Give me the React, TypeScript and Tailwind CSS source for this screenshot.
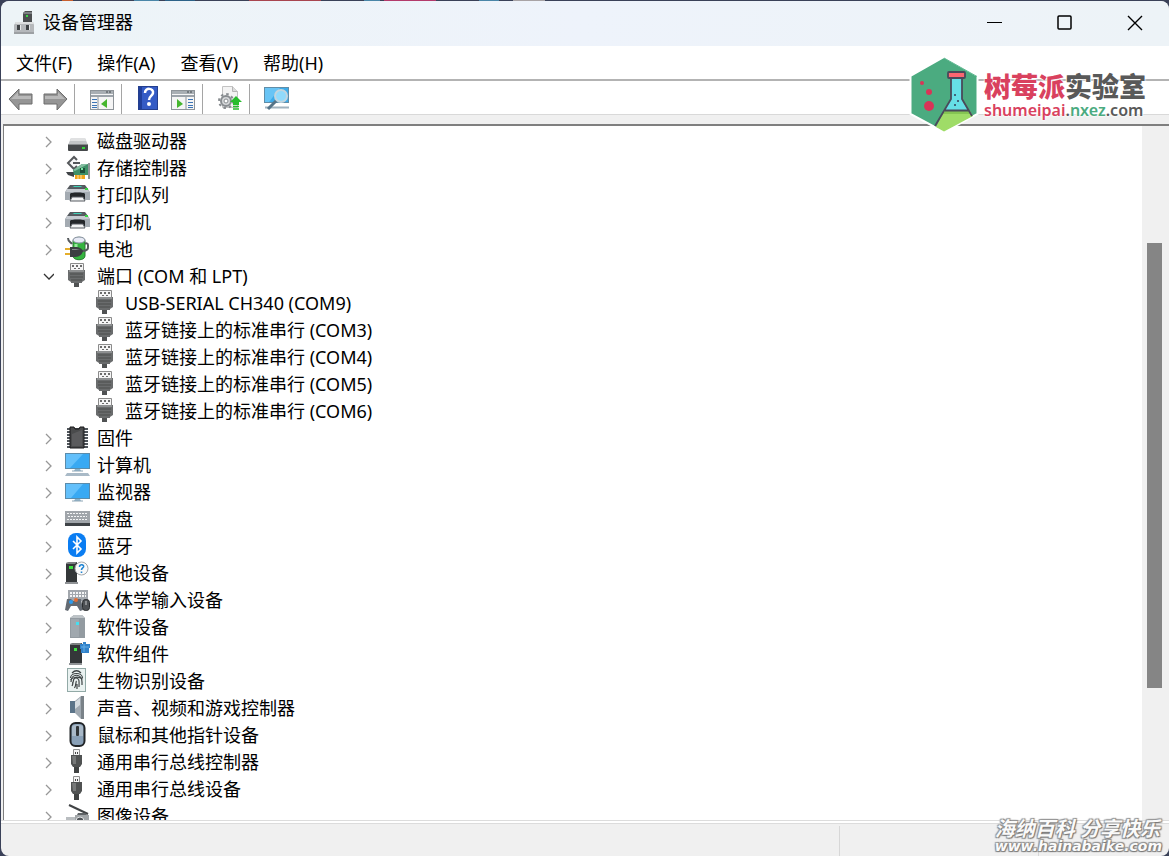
import React, { useState } from "react";

type Device = {
  name: string;
  icon: React.FC;
  children?: string[];
};

const DiskIcon = () => (
  <svg width="26" height="27" viewBox="0 0 26 27">
    <path d="M6 10h14l3 7H3z" fill="#c3c5c7" />
    <path d="M6 10h14l1 3H5z" fill="#e0e1e2" />
    <rect x="3" y="16" width="20" height="7" rx="1" fill="#45484a" />
    <rect x="3" y="16" width="20" height="1" fill="#8a8d8f" />
    <rect x="17" y="19" width="3" height="2" fill="#35d43a" />
  </svg>
);

const StorageIcon = () => (
  <svg width="26" height="27" viewBox="0 0 26 27">
    <path d="M1 17h8v5l-6-2z" fill="#3f4346" />
    <path d="M8 3l6 5-6 6-6-6z" fill="#f7f7f7" />
    <path d="M12 5L9 2 3 8l6 6 3-3M8 8h7" fill="none" stroke="#55585b" strokeWidth="2" />
    <path d="M8 15l9-6h6v11H9z" fill="#3f9068" />
    <path d="M8 15l9-6h6l-13 7z" fill="#83bda0" />
    <rect x="15" y="13" width="5" height="5" fill="#1e4e3a" />
    <rect x="16" y="13" width="2" height="2" fill="#7be8a4" />
    <path d="M10 20h10v4H10z" fill="#f1a51c" />
    <path d="M13 20v4M16 20v4" stroke="#fbe0a0" />
    <path d="M24 8v16" stroke="#909497" strokeWidth="2" />
  </svg>
);

const PrinterIcon = () => (
  <svg width="26" height="27" viewBox="0 0 26 27">
    <path d="M5 3h15l3 4H2z" fill="#54595e" />
    <path d="M7 4h11l1 2H6z" fill="#596066" />
    <path d="M9 4h7l1 1H8z" fill="#3fd0b5" />
    <path d="M2 7h21l2 3v8H0v-8z" fill="#a4abb2" />
    <path d="M2 7h21l1 3H1z" fill="#c5cad0" />
    <rect x="20" y="6" width="3" height="2" fill="#38d343" />
    <path d="M5 12c0-2 15-2 15 0v5H5z" fill="#24272a" />
    <path d="M7 15h11l2 4H5z" fill="#f2f3f4" stroke="#565b60" />
  </svg>
);

const BatteryIcon = () => (
  <svg width="26" height="27" viewBox="0 0 26 27">
    <path d="M8 5c0-5 12-5 12 0v15c0 5-12 5-12 0z" fill="#35b43f" stroke="#287c30" />
    <ellipse cx="14" cy="4" rx="6" ry="3" fill="#e7eaf5" stroke="#8c91a5" />
    <path d="M11 8v10" stroke="#99ec9e" strokeWidth="3" />
    <path d="M3 2c0 4 3 4 4 6" stroke="#55595c" strokeWidth="2" fill="none" />
    <path d="M17 15c7 0 6-3 6-6 0-2-2-2-3-1" stroke="#55595c" strokeWidth="2" fill="none" />
    <path d="M0 13h6M0 18h6" stroke="#e5ae2c" strokeWidth="2" />
    <path d="M5 11h5c5 0 7 2 8 4-1 4-4 6-8 6H5z" fill="#3b3f42" />
    <path d="M7 13h4l4 1H7z" fill="#85898c" />
  </svg>
);

const PortIcon = () => (
  <svg width="26" height="27" viewBox="0 0 26 27">
    <path d="M5.500 8V.5h13V8" fill="#f5f5f5" stroke="#8b8b8b" />
    <path d="M7 2h2v2H7zM11 2h2v2h-2zM15 2h2v2h-2zM9 5h2v1H9zM13 5h2v1h-2z" fill="#6c6c6c" />
    <path d="M3 7h17v10l-3 2v1H6v-1l-3-2z" fill="#6a6c6d" />
    <path d="M4 7h15v2H4z" fill="#8d8f90" />
    <path d="M5 11h13M5 14h13M6 17h11" stroke="#4a4c4d" />
    <rect x="9" y="20" width="5" height="4" fill="#505253" />
  </svg>
);

const FirmwareIcon = () => (
  <svg width="26" height="27" viewBox="0 0 26 27">
    <path d="M2 4h21M2 7h21M2 10h21M2 13h21M2 16h21M2 19h21M2 22h21" stroke="#50565c" strokeWidth="2" />
    <path d="M5 2h4l1 2h4l1-2h4v21H5z" fill="#4a4b4c" stroke="#19191a" />
    <path d="M7 9l10-4v16H7z" fill="#6b6c6d" opacity="0.5" />
  </svg>
);

const ComputerIcon = () => (
  <svg width="26" height="27" viewBox="0 0 26 27">
    <rect x="0.5" y="1.5" width="24" height="15" fill="#39a9f3" stroke="#5b8cab" />
    <path d="M1 2h17L5 16H1z" fill="#63c0fb" />
    <path d="M10 17h5l1 2H9z" fill="#8db4cc" />
    <path d="M7 19h11" stroke="#8da5b5" />
    <path d="M2 21h21l2 3H0z" fill="#a9bac7" />
  </svg>
);

const MonitorIcon = () => (
  <svg width="26" height="27" viewBox="0 0 26 27">
    <rect x="0.5" y="4.5" width="24" height="15" fill="#39a9f3" stroke="#5b8cab" />
    <path d="M1 5h17L6 19H1z" fill="#63c0fb" />
    <path d="M10 20h5l1 2H9z" fill="#8db4cc" />
    <path d="M7 22h11" stroke="#8da5b5" />
  </svg>
);

const KeyboardIcon = () => (
  <svg width="26" height="27" viewBox="0 0 26 27">
    <rect x="0" y="5" width="25" height="12" fill="#a0a5aa" />
    <rect x="0" y="17" width="25" height="3" fill="#3e4347" />
    <path d="M2 7.500h21" stroke="#f4f5f6" strokeDasharray="2 1" />
    <path d="M3 10.500h19" stroke="#f4f5f6" strokeDasharray="2 1" />
    <path d="M2 13.500h21" stroke="#f4f5f6" strokeDasharray="2 1" />
  </svg>
);

const BluetoothIcon = () => (
  <svg width="26" height="27" viewBox="0 0 26 27">
    <rect x="3" y="0" width="18" height="24" rx="8" fill="#0a7df2" />
    <path d="M8 8l8 8-4 4V4l4 4-8 8" fill="none" stroke="#fff" strokeWidth="1.600" />
  </svg>
);

const OtherIcon = () => (
  <svg width="26" height="27" viewBox="0 0 26 27">
    <path d="M1 3l4-1h7v20H1z" fill="#343739" />
    <path d="M1 3l4-1h7l-2 2H1z" fill="#7d8082" />
    <rect x="4" y="6" width="4" height="3" fill="#3be03f" />
    <path d="M0 22h13v2H0z" fill="#909396" />
    <circle cx="16.500" cy="8.500" r="6.500" fill="#fafafa" stroke="#a3a7aa" />
    <path d="M14.500 7c0-3.500 5-2.500 4 0-.5 1-2 1-2 3M16.500 11.500v1.500" fill="none" stroke="#1e83d2" strokeWidth="1.600" />
  </svg>
);

const HidIcon = () => (
  <svg width="26" height="27" viewBox="0 0 26 27">
    <rect x="3" y="3" width="20" height="11" fill="#a2a7ad" />
    <path d="M5 6h16M5 9h16" stroke="#f4f5f6" strokeWidth="2" strokeDasharray="2 1" />
    <path d="M2 12h4l2 2h2l2-2h4l2 11-3 1-3-5H6l-3 5-3-1z" fill="#646b73" />
    <circle cx="6" cy="15" r="2" fill="#2d9cf0" />
    <circle cx="11" cy="13" r="2" fill="#e56d35" />
    <rect x="17.500" y="12.500" width="7" height="11" rx="3" fill="#4c5054" stroke="#292c2f" />
    <path d="M21 14v4" stroke="#c6c9cc" />
  </svg>
);

const SoftwareDeviceIcon = () => (
  <svg width="26" height="27" viewBox="0 0 26 27">
    <path d="M5 4l4-3h8l3 3v20H5z" fill="#939ba1" />
    <path d="M5 4l4-3h8l3 3z" fill="#bdc3c7" />
    <path d="M6 5h8v18H6z" fill="#a0a8ae" />
    <rect x="11" y="8" width="3" height="3" fill="#45dff0" />
  </svg>
);

const SoftwareComponentIcon = () => (
  <svg width="26" height="27" viewBox="0 0 26 27">
    <path d="M5 3l4-1h8v20H5z" fill="#343739" />
    <path d="M5 3l4-1h8l-2 2H5z" fill="#7d8082" />
    <rect x="9" y="7" width="3" height="3" fill="#3be03f" />
    <path d="M4 22h13v2H4z" fill="#909396" />
    <path d="M15 3h3V1h3v2h4v4h-1v5h-8V8h-1z" fill="#3283ca" />
    <path d="M19 3v8M16 6h8" stroke="#67afe7" />
  </svg>
);

const BiometricIcon = () => (
  <svg width="26" height="27" viewBox="0 0 26 27">
    <rect x="2.500" y="0.500" width="18" height="23" fill="#eaf2f1" stroke="#92aaa7" />
    <g fill="none" stroke="#3e4345" strokeWidth="1.200">
      <path d="M7 5c3-3 6-3 9 0M5.500 10c0-6 12-6 12 0M6 14c0-9 11-9 11 0v3" />
      <path d="M7 18c2-3 0-8 4-8s3 5 3 9M9.500 20c2-3 1-6 2-7M7 15c2 0 1-3 2-4M12 16v5M5.500 12c2-3 8-4 12-1" />
    </g>
  </svg>
);

const SoundIcon = () => (
  <svg width="26" height="27" viewBox="0 0 26 27">
    <path d="M5 6h5v12H5z" fill="#5b7489" />
    <path d="M10 6l6-5v23l-6-6z" fill="#a0a9b1" />
    <path d="M10 7l5-4v7l-5 4z" fill="#d5dce1" />
    <path d="M16 1h3v23h-3z" fill="#7a8288" />
  </svg>
);

const MouseIcon = () => (
  <svg width="26" height="27" viewBox="0 0 26 27">
    <rect x="5.500" y="1" width="14" height="23" rx="5" fill="#89a0b7" stroke="#212427" strokeWidth="2" />
    <path d="M7 5c1-3 10-3 11 0v9H7z" fill="#a9b9c8" />
    <rect x="11" y="4" width="3" height="10" rx="1" fill="#303437" />
  </svg>
);

const UsbIcon = () => (
  <svg width="26" height="27" viewBox="0 0 26 27">
    <path d="M8.500 7V.5h6V7" fill="#f4f4f4" stroke="#909090" />
    <path d="M10 3h1v2h-1zM12 3h1v2h-1z" fill="#484848" />
    <path d="M6 6h11v9l-2 3H8l-2-3z" fill="#505252" />
    <path d="M7 7h4v8H8z" fill="#777979" />
    <rect x="9" y="18" width="5" height="6" fill="#404242" />
  </svg>
);

const ImagingIcon = () => (
  <svg width="26" height="27" viewBox="0 0 26 27">
    <path d="M4 2l19 9" stroke="#404345" strokeWidth="2" />
    <path d="M1 14h12v8H1z" fill="#b9bdc0" />
    <path d="M10 12h14v10H10z" fill="#a1a5a8" />
    <path d="M13 10h7l2 2H12z" fill="#606467" />
    <circle cx="15" cy="18" r="4" fill="#505458" stroke="#e1e3e5" />
  </svg>
);

const devices: Device[] = [
  { name: "磁盘驱动器", icon: DiskIcon },
  { name: "存储控制器", icon: StorageIcon },
  { name: "打印队列", icon: PrinterIcon },
  { name: "打印机", icon: PrinterIcon },
  { name: "电池", icon: BatteryIcon },
  {
    name: "端口 (COM 和 LPT)",
    icon: PortIcon,
    children: [
      "USB-SERIAL CH340 (COM9)",
      "蓝牙链接上的标准串行 (COM3)",
      "蓝牙链接上的标准串行 (COM4)",
      "蓝牙链接上的标准串行 (COM5)",
      "蓝牙链接上的标准串行 (COM6)",
    ],
  },
  { name: "固件", icon: FirmwareIcon },
  { name: "计算机", icon: ComputerIcon },
  { name: "监视器", icon: MonitorIcon },
  { name: "键盘", icon: KeyboardIcon },
  { name: "蓝牙", icon: BluetoothIcon },
  { name: "其他设备", icon: OtherIcon },
  { name: "人体学输入设备", icon: HidIcon },
  { name: "软件设备", icon: SoftwareDeviceIcon },
  { name: "软件组件", icon: SoftwareComponentIcon },
  { name: "生物识别设备", icon: BiometricIcon },
  { name: "声音、视频和游戏控制器", icon: SoundIcon },
  { name: "鼠标和其他指针设备", icon: MouseIcon },
  { name: "通用串行总线控制器", icon: UsbIcon },
  { name: "通用串行总线设备", icon: UsbIcon },
  { name: "图像设备", icon: ImagingIcon },
];

const menus = ["文件(F)", "操作(A)", "查看(V)", "帮助(H)"];

// Bits of the window behind, seen above the title bar
const BackdropStrip = () => (
  <div className="flex h-px shrink-0 bg-[#3a4158]">
    <span className="ml-[61px] w-[11px] bg-[#c9602f]" />
    <span className="ml-[61px] w-[25px] bg-[#4a86a8]" />
    <span className="ml-[6px] w-[30px] bg-[#2c6288]" />
    <span className="ml-[54px] w-[72px] bg-[#a8454f]" />
    <span className="ml-[43px] w-[16px] bg-[#4a86a8]" />
    <span className="ml-[4px] w-[52px] bg-[#b33a6b]" />
    <span className="ml-[43px] w-[20px] bg-[#4a86a8]" />
    <span className="ml-[14px] w-[32px] bg-[#a8a3a5]" />
  </div>
);

const TitleBar = () => (
  <header className="flex h-[45px] shrink-0 items-center rounded-t-lg bg-linear-to-r from-[#edf4f7] via-[#eef3fb] to-[#edf3f7] pb-[2px] pl-3">
    <svg width="22" height="26" viewBox="0 0 22 26" className="mr-2">
      <path d="M10 3l2-2h7v12h-9z" fill="#4b4e50" />
      <path d="M11 2h8v2h-9z" fill="#7c8082" />
      <rect x="13" y="5" width="2" height="2" fill="#39d742" />
      <path d="M3 12h17l1 3v9H1v-9z" fill="#b5b8bb" />
      <path d="M3 12h17l1 2H2z" fill="#dddfe0" />
      <path d="M4 15h4v5H4zM13 15h4v5h-4z" fill="#3f4346" />
      <path d="M7 15h1v5H7zM16 15h1v5h-1z" fill="#e7e8e9" />
      <path d="M1 23h20" stroke="#84888b" />
    </svg>
    <h1 className="flex-1">设备管理器</h1>
    <div className="flex h-full">
      <button aria-label="最小化" className="flex w-[70px] items-center justify-center">
        <svg width="16" height="16" viewBox="0 0 16 16">
          <path d="M0 7.500h15" stroke="#000" />
        </svg>
      </button>
      <button aria-label="最大化" className="flex w-[70px] items-center justify-center">
        <svg width="16" height="16" viewBox="0 0 16 16">
          <rect x="1" y="1" width="13" height="13" rx="1" fill="none" stroke="#000" strokeWidth="1.500" />
        </svg>
      </button>
      <button aria-label="关闭" className="flex w-[69px] items-center justify-center">
        <svg width="16" height="16" viewBox="0 0 16 16">
          <path d="M1 1l14 14M15 1L1 15" stroke="#000" strokeWidth="1.400" />
        </svg>
      </button>
    </div>
  </header>
);

const Separator = () => (
  <div className="w-[21px] self-stretch pl-[6px]">
    <div className="my-[2px] h-[30px] w-px bg-[#a5a5a5]" />
  </div>
);

const ToolButton = ({ label, children }: { label: string; children: React.ReactNode }) => (
  <button aria-label={label} title={label} className="h-[26px] w-[26px]">
    <svg width="26" height="26" viewBox="0 0 26 26">
      {children}
    </svg>
  </button>
);

const arrowPath = "M1 14L11 4v5h13v10H11v6z";

const Toolbar = () => (
  <div className="flex h-[34px] shrink-0 items-center border-b border-[#d9d9d9] bg-white pt-px pl-[7px]">
    <div className="flex gap-2">
      <ToolButton label="后退">
        <path d={arrowPath} fill="#959595" stroke="#6c6c6c" />
        <path d="M3 14l7-7v4h13v3z" fill="#b9b9b9" />
      </ToolButton>
      <ToolButton label="前进">
        <g transform="matrix(-1 0 0 1 26 0)">
          <path d={arrowPath} fill="#959595" stroke="#6c6c6c" />
          <path d="M3 14l7-7v4h13v3z" fill="#b9b9b9" />
        </g>
      </ToolButton>
    </div>
    <Separator />
    <ToolButton label="显示/隐藏控制台树">
      <rect x="1.500" y="5.500" width="23" height="19" fill="#f5f5f5" stroke="#8e9499" />
      <path d="M2 6h22v3H2z" fill="#a9afb4" />
      <path d="M17 7h2M20 7h2" stroke="#3f4548" />
      <path d="M2 11h22" stroke="#9ca3aa" strokeWidth="2" />
      <path d="M9 12v13" stroke="#8e9499" />
      <path d="M3 14.500h5M3 17.500h5M3 20.500h5M3 22.500h5" stroke="#3c74b5" />
      <path d="M18 14v9l-6-4z" fill="#46b62e" />
    </ToolButton>
    <Separator />
    <div className="flex gap-2">
      <ToolButton label="帮助">
        <rect x="2.500" y="1.500" width="19" height="23" fill="#345bc5" stroke="#243f8e" />
        <path d="M3 2h3v22H3z" fill="#203f9a" />
        <path d="M9 8c0-6 9-5 8 0-.5 3-4 3-4 7" fill="none" stroke="#fff" strokeWidth="2.500" />
        <circle cx="13" cy="19" r="2" fill="#fff" />
      </ToolButton>
      <ToolButton label="显示/隐藏操作窗格">
        <rect x="1.500" y="5.500" width="23" height="19" fill="#f5f5f5" stroke="#8e9499" />
        <path d="M2 6h22v3H2z" fill="#a9afb4" />
        <path d="M17 7h2M20 7h2" stroke="#3f4548" />
        <path d="M2 11h22" stroke="#9ca3aa" strokeWidth="2" />
        <path d="M16 12v13" stroke="#8e9499" />
        <path d="M18 14.500h5M18 17.500h5M18 20.500h5M18 22.500h5" stroke="#3c74b5" />
        <path d="M7 14v9l6-4z" fill="#46b62e" />
      </ToolButton>
    </div>
    <Separator />
    <ToolButton label="更新设备驱动程序">
      <path d="M5.500 1.500h10l5 5v16h-15z" fill="#f3f3f3" stroke="#c2c2c2" />
      <path d="M15.500 1.500v5h5" fill="#dcdcdc" stroke="#b5b5b5" />
      <circle cx="9" cy="16" r="5" fill="#d4d6d8" stroke="#888c90" strokeWidth="2" />
      <circle cx="9" cy="16" r="7" fill="none" stroke="#888c90" strokeWidth="2" strokeDasharray="2.500 3" />
      <circle cx="9" cy="16" r="2" fill="#fff" stroke="#888c90" />
      <path d="M19 11l6 6h-3v3h-6v-3h-3z" fill="#27bd2d" />
      <path d="M16 21.500h6M16 24h6" stroke="#27bd2d" strokeWidth="1.500" />
    </ToolButton>
    <Separator />
    <ToolButton label="扫描检测硬件改动">
      <rect x="0.500" y="2.500" width="24" height="15" fill="#3dabe9" stroke="#608da8" />
      <path d="M1 3h15L5 17H1z" fill="#68c4f5" />
      <path d="M1 22.500h24" stroke="#a0b2be" strokeWidth="2" />
      <path d="M13 15L4 24" stroke="#557387" strokeWidth="3" />
      <circle cx="17" cy="11" r="6" fill="#91dafb" stroke="#c2d5df" strokeWidth="2" />
    </ToolButton>
  </div>
);

const DeviceTree = () => {
  const [open, setOpen] = useState<string[]>(["端口 (COM 和 LPT)"]);

  const toggle = (name: string) => {
    setOpen(
      open.includes(name) ? open.filter((n) => n !== name) : [...open, name]
    );
  };

  return (
    <ul className="min-w-0 flex-1 overflow-hidden pt-[2px] pl-9">
      {devices.map((device) => {
        const expanded = open.includes(device.name);
        return (
          <li key={device.name}>
            <div className="flex h-[27px] items-center">
              <button
                aria-label={device.name}
                aria-expanded={expanded}
                onClick={() => toggle(device.name)}
                className="mr-[9px] flex h-4 w-4 items-center justify-center"
              >
                <svg width="12" height="12" viewBox="0 0 12 12" fill="none" strokeWidth="1.300">
                  {expanded ? (
                    <path d="M2 3l5 5 5-5" stroke="#333" />
                  ) : (
                    <path d="M4 1l5 5-5 5" stroke="#979797" />
                  )}
                </svg>
              </button>
              <device.icon />
              <span className="ml-[6px] whitespace-nowrap">{device.name}</span>
            </div>
            {expanded && device.children && (
              <ul className="pl-[53px]">
                {device.children.map((child) => (
                  <li key={child} className="flex h-[27px] items-center">
                    <PortIcon />
                    <span className="ml-[6px] whitespace-nowrap">{child}</span>
                  </li>
                ))}
              </ul>
            )}
          </li>
        );
      })}
    </ul>
  );
};

const SiteLogo = () => (
  <div className="absolute top-[55px] right-[23px] flex items-center">
    <svg width="70" height="80" viewBox="0 0 70 80" className="mr-[5px]">
      <path d="M35 2l33.500 19v38L35 77 1.500 59V21z" fill="#4bab80" stroke="#fff" strokeWidth="2" />
      <path d="M35 3l33 18.500" stroke="#5fb991" />
      <circle cx="13" cy="28" r="2" fill="#da3457" />
      <circle cx="20" cy="37" r="3" fill="#da3457" />
      <circle cx="20" cy="51" r="5" fill="#da3457" />
      <path d="M42 24h11v21l7 12H34l8-13z" fill="#66dfe6" />
      <path d="M35 56h26l3 5-29 15.500-8-4.500z" fill="#9fdc67" />
      <path d="M36 56h25l1 3H34z" fill="#85c553" />
      <path d="M42 24v20L26 71M53 24v20l10 17M36 55.500h24" fill="none" stroke="#4a4a5a" strokeWidth="1.800" />
      <rect x="39" y="17" width="17" height="6" rx="1" fill="#fc6671" stroke="#4a4a5a" strokeWidth="1.800" />
      <circle cx="46" cy="40" r="1" fill="#343c58" />
      <circle cx="49" cy="46" r="1" fill="#343c58" />
      <circle cx="46" cy="50" r="1" fill="#343c58" />
    </svg>
    <div className="pt-1 [text-shadow:0_0_2px_#fff,0_0_2px_#fff,0_0_3px_#fff]">
      <p className="text-[27px] leading-[26px] font-black text-[#595959]">
        <span className="text-[#d9415e]">树莓派</span>实验室
      </p>
      <p className="font-['Noto_Sans',sans-serif] text-[16px] leading-[20px] font-semibold text-[#595959]">
        <span className="text-[#d9415e]">shumeipai</span>.
        <span className="text-[#4bab80]">nxez</span>.com
      </p>
    </div>
  </div>
);

const Watermark = () => (
  <div className="absolute right-[7px] bottom-[2px] font-bold text-[#fafafa] italic [text-shadow:1px_1px_1px_#777,-1px_-1px_1px_#999,1px_-1px_1px_#888,-1px_1px_1px_#888]">
    <p className="text-[20px] leading-[18px]">海纳百科 分享快乐</p>
    <p className="font-['DejaVu_Sans'] text-[14px] leading-[16px]">www.hainabaike.com</p>
  </div>
);

const App: React.FC = () => {
  return (
    <div className="relative h-screen overflow-hidden bg-[#3a4158] font-['Noto_Sans','Noto_Sans_CJK_SC',sans-serif] text-[18px] leading-[27px] text-black">
      <div className="flex h-full flex-col pl-px">
        <BackdropStrip />
        <div className="flex min-h-0 flex-1 flex-col overflow-hidden rounded-lg bg-[#f0f0f0]">
          <TitleBar />
          <nav className="flex h-[35px] shrink-0 items-center gap-[25px] border-b-2 border-[#b3b3b3] bg-white pt-px pl-[15px]">
            {menus.map((menu) => (
              <button key={menu}>{menu}</button>
            ))}
          </nav>
          <Toolbar />
          <main className="mt-[9px] ml-[2px] flex min-h-0 flex-1 border-t-2 border-l border-[#7f7f7f] bg-white">
            <DeviceTree />
            <div className="w-[27px] shrink-0 bg-[#f0f0f0] px-[5px] pt-[117px]">
              <div className="h-[445px] w-[15px] bg-[#858585]" />
            </div>
          </main>
          <footer className="flex h-[36px] shrink-0 flex-col border-t border-[#dcdcdc]">
            <div className="h-[2px] bg-white" />
            <div className="flex flex-1 border-t border-[#dcdcdc] pt-[2px]">
              <div className="flex-1 border-r border-[#d7d7d7]" />
              <div className="w-[199px] border-r border-[#d7d7d7]" />
              <div className="w-[130px]" />
            </div>
          </footer>
        </div>
      </div>
      <SiteLogo />
      <Watermark />
    </div>
  );
};

export default App;
